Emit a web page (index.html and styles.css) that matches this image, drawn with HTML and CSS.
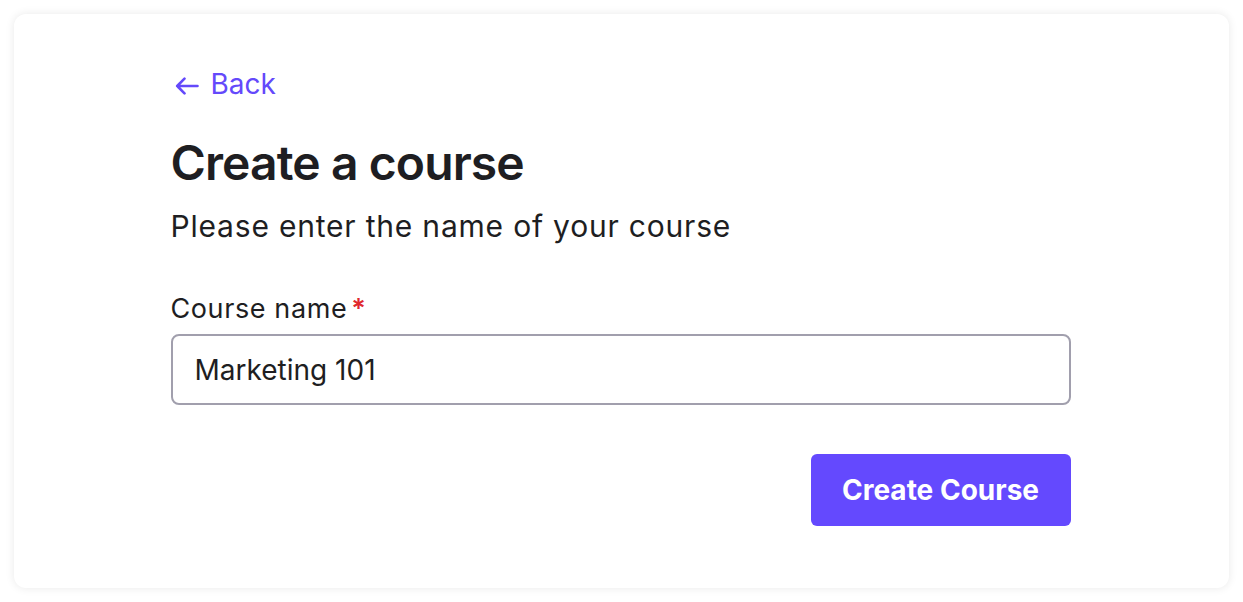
FILE: index.html
```html
<!DOCTYPE html>
<html lang="en">
<head>
<meta charset="utf-8">
<title>Create a course</title>
<link rel="stylesheet" href="styles.css">
</head>
<body>
<main class="card">
  <div class="content">
    <a class="back" href="#">
      <svg class="back-icon" viewBox="0 0 24 18" width="24" height="18" aria-hidden="true">
        <path d="M22.5 9H2.2M9.5 1.6L2.2 9l7.3 7.4" fill="none" stroke="currentColor" stroke-width="2.6" stroke-linecap="round" stroke-linejoin="round"/>
      </svg>
      <span>Back</span>
    </a>
    <h1 class="title">Create a course</h1>
    <p class="subtitle">Please enter the name of your course</p>
    <form class="form">
      <label class="label" for="course-name">Course name<span class="req">*</span></label>
      <input class="input" id="course-name" type="text" value="Marketing 101">
      <div class="actions">
        <button class="btn" type="button">Create Course</button>
      </div>
    </form>
  </div>
</main>
</body>
</html>
```
FILE: styles.css
```css
* { box-sizing: border-box; }
html, body { margin: 0; background: #ffffff; }
body {
  padding: 14px;
  font-family: Inter, "Noto Sans", sans-serif;
  color: #1e1e22;
}
.card {
  background: #fff;
  border-radius: 12px;
  box-shadow: 0 0 10px rgba(0, 0, 0, 0.09);
  padding: 50px 0 62px;
  min-height: 574px;
}
.content {
  width: 900px;
  margin: 0 auto;
  display: flex;
  flex-direction: column;
  transform: translateX(-1px);
}
.back {
  display: inline-flex;
  align-items: center;
  gap: 12px;
  align-self: flex-start;
  color: #6449fb;
  text-decoration: none;
  font-size: 28px;
  line-height: 40px;
  padding-left: 4px;
}
.back-icon { display: block; margin-top: 4px; }
.title {
  margin: 29px 0 0;
  font-size: 48px;
  line-height: 60px;
  font-weight: 600;
  letter-spacing: -0.9px;
}
.subtitle {
  margin: 13px 0 0;
  font-size: 30px;
  line-height: 40px;
  font-weight: 400;
  letter-spacing: 0.8px;
}
.form {
  margin-top: 45px;
  display: flex;
  flex-direction: column;
}
.label {
  font-size: 27px;
  line-height: 36px;
  font-weight: 400;
  letter-spacing: 0.6px;
}
.req {
  color: #e0282e;
  margin-left: 4px;
  font-weight: 600;
}
.input {
  margin-top: 7px;
  height: 71px;
  border: 2px solid #a19fad;
  border-radius: 8px;
  padding: 0 22px;
  font-family: inherit;
  font-size: 28px;
  color: #1e1e22;
  outline: none;
}
.actions {
  margin-top: 49px;
  display: flex;
  justify-content: flex-end;
}
.btn {
  width: 260px;
  height: 72px;
  border: none;
  border-radius: 6px;
  background: #6449fe;
  color: #fff;
  font-family: inherit;
  font-size: 28px;
  font-weight: 700;
  cursor: pointer;
}
```
